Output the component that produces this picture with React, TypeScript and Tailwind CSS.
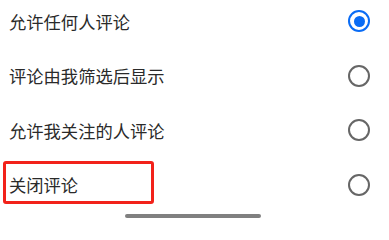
import React from 'react';

const options = ['允许任何人评论', '评论由我筛选后显示', '允许我关注的人评论', '关闭评论'];

const Radio: React.FC<{ checked: boolean }> = ({ checked }) =>
    checked ? (
        <div className="w-[22px] h-[22px] rounded-full border-[2.5px] border-[#0a6cf5] flex items-center justify-center">
            <div className="w-[11px] h-[11px] rounded-full bg-[#0a6cf5]" />
        </div>
    ) : (
        <div className="w-[22px] h-[22px] rounded-full border-[2px] border-[#666666]" />
    );

export default function App() {
    return (
        <div
            className="relative w-[389px] h-[218px] overflow-hidden bg-white"
            style={{ fontFamily: '"Noto Sans CJK SC", "Noto Sans", sans-serif' }}
        >
            <div className="flex flex-col -mt-[6px]">
                {options.map((label, i) => (
                    <div key={label} className="relative h-[54.5px] flex items-center justify-between pl-[9px] pr-[19px]">
                        <span className="text-[17.3px] leading-none text-[#2a2a2a]">{label}</span>
                        <Radio checked={i === 0} />
                        {i === 3 && (
                            <div className="absolute left-[3px] top-[3px] w-[151px] h-[43px] border-[3px] border-[#f2221a] rounded-[3px]" />
                        )}
                    </div>
                ))}
            </div>
            {/* home indicator */}
            <div className="absolute left-[125px] top-[214px] w-[136px] h-[4px] rounded-full bg-[#808080]" />
        </div>
    );
}
